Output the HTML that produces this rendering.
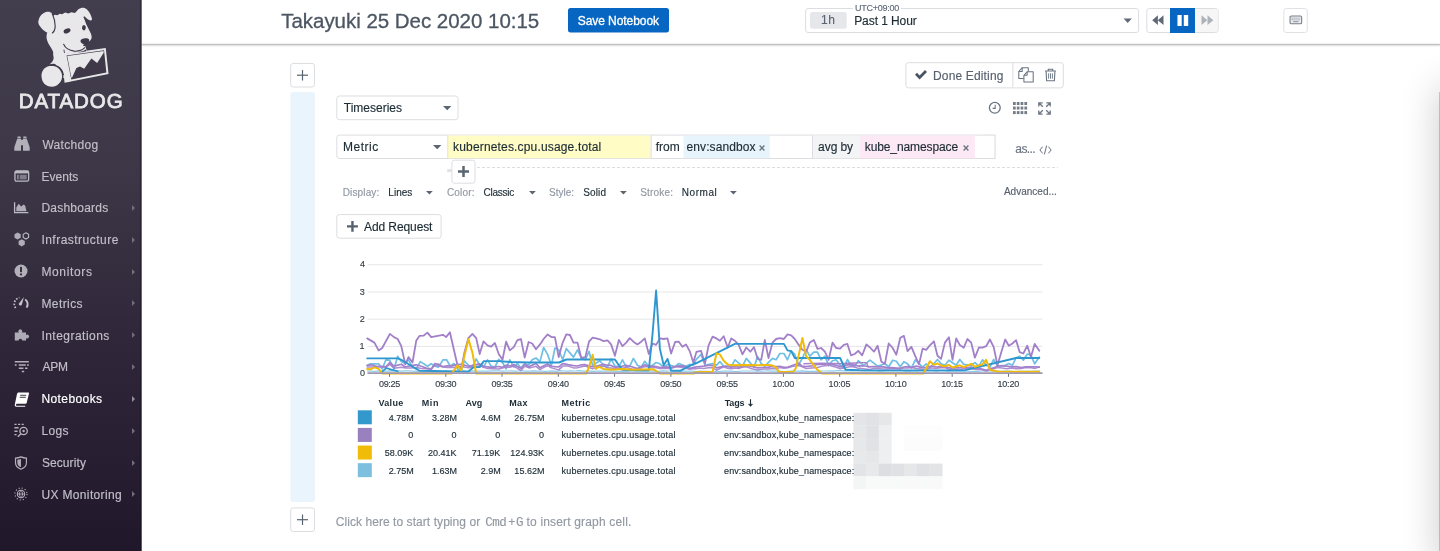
<!DOCTYPE html>
<html>
<head>
<meta charset="utf-8">
<title>Notebook</title>
<style>
*{box-sizing:border-box;margin:0;padding:0}
html,body{width:1440px;height:551px;overflow:hidden;background:#fff;font-family:"Liberation Sans",sans-serif;color:#1c2b34}
.abs{position:absolute}
.t{position:absolute;white-space:pre;line-height:1}
svg{position:absolute;overflow:visible}
</style>
</head>
<body>
<div id="root" style="position:absolute;left:0;top:0;width:1440px;height:551px;will-change:transform">
<div class="abs" style="left:0;top:0;width:142px;height:551px;background:linear-gradient(180deg,#433e4e 0%,#3d3747 30%,#2e2638 65%,#21172b 100%)"></div>
<svg style="left:0;top:0" width="1440" height="551" viewBox="0 0 1440 551"><rect x="139.90" y="0.00" width="1.80" height="551.00" fill="rgba(20,10,30,.35)"/>
<rect x="141.70" y="0.00" width="0.30" height="551.00" fill="#ffffff"/>
<rect x="568.00" y="8.00" width="101.00" height="24.50" rx="2.5" fill="#0866c3"/>
<rect x="805.60" y="8.50" width="333.00" height="24.00" rx="2.50" fill="#fff" stroke="#dcdde0" stroke-width="1.0"/>
<rect x="853.00" y="7.00" width="48.00" height="3.00" fill="#fff"/>
<rect x="810.00" y="12.00" width="36.70" height="16.70" rx="2.5" fill="#e6e7ea"/>
<rect x="1146.80" y="8.50" width="71.30" height="24.00" rx="2.50" fill="#fff" stroke="#dcdde0" stroke-width="1.0"/>
<path d="M1195.0 9H1215.6a2.0 2.0 0 0 1 2.0 2.0V30.0a2.0 2.0 0 0 1 -2.0 2.0H1195.0a0.0 0.0 0 0 1 -0.0 -0.0V9.0a0.0 0.0 0 0 1 0.0 -0.0z" fill="#f6f6f7"/>
<rect x="1170.00" y="8.00" width="25.00" height="25.00" fill="#0866c3"/>
<rect x="1283.80" y="8.50" width="23.50" height="24.00" rx="2.50" fill="#fff" stroke="#e0e1e4" stroke-width="1.0"/>
<rect x="1439.00" y="92.00" width="1.00" height="459.00" fill="rgba(120,120,125,.35)"/>
<rect x="290.70" y="63.40" width="23.80" height="23.60" rx="2.50" fill="#fff" stroke="#dcdde0" stroke-width="1.0"/>
<rect x="297.00" y="74.60" width="11.00" height="1.20" fill="#5b6572"/>
<rect x="301.90" y="70.00" width="1.20" height="10.50" fill="#5b6572"/>
<rect x="290.70" y="507.90" width="23.80" height="23.60" rx="2.50" fill="#fff" stroke="#dcdde0" stroke-width="1.0"/>
<rect x="297.00" y="519.10" width="11.00" height="1.20" fill="#5b6572"/>
<rect x="301.90" y="514.50" width="1.20" height="10.50" fill="#5b6572"/>
<rect x="290.40" y="92.10" width="24.60" height="409.80" rx="3.0" fill="#e9f4fc"/>
<rect x="905.90" y="62.70" width="157.40" height="25.20" rx="2.50" fill="#fff" stroke="#dcdde0" stroke-width="1.0"/>
<rect x="1012.40" y="63.00" width="1.00" height="24.50" fill="#dcdde0"/>
<rect x="336.80" y="96.00" width="121.20" height="23.70" rx="2.50" fill="#fff" stroke="#dcdde0" stroke-width="1.0"/>
<rect x="336.80" y="135.10" width="658.20" height="23.40" rx="2.50" fill="#fff" stroke="#dcdde0" stroke-width="1.0"/>
<rect x="985.00" y="134.60" width="10.50" height="24.40" fill="#fff"/>
<rect x="985.00" y="134.60" width="10.50" height="1.00" fill="#dcdde0"/>
<rect x="985.00" y="158.00" width="10.50" height="1.00" fill="#dcdde0"/>
<rect x="994.50" y="134.60" width="1.00" height="24.40" fill="#dcdde0"/>
<rect x="447.80" y="135.50" width="202.80" height="22.70" fill="#fffcc6"/>
<rect x="447.30" y="135.50" width="1.00" height="22.70" fill="#e6e4c0"/>
<rect x="650.60" y="135.50" width="1.00" height="22.70" fill="#dcdde0"/>
<rect x="683.50" y="135.50" width="86.30" height="22.70" fill="#e8f4fc"/>
<rect x="812.00" y="135.50" width="1.00" height="22.70" fill="#dcdde0"/>
<rect x="813.00" y="135.50" width="46.50" height="22.70" fill="#f3f4f5"/>
<rect x="859.50" y="135.50" width="115.40" height="22.70" fill="#fde8f5"/>
<rect x="447.20" y="169.10" width="4.60" height="3.00" fill="#e2e2e5"/>
<rect x="451.90" y="160.20" width="23.10" height="23.00" rx="2.50" fill="#fff" stroke="#dcdde0" stroke-width="1.0"/>
<rect x="336.80" y="214.60" width="104.30" height="23.60" rx="2.50" fill="#fff" stroke="#dcdde0" stroke-width="1.0"/>
<rect x="357.80" y="410.30" width="14.00" height="14.00" fill="#3399cc"/>
<rect x="357.80" y="427.92" width="14.00" height="14.00" fill="#9980bf"/>
<rect x="357.80" y="445.54" width="14.00" height="14.00" fill="#f0bc08"/>
<rect x="357.80" y="463.16" width="14.00" height="14.00" fill="#7cbfdf"/>
<rect x="853.40" y="412.80" width="12.90" height="12.90" fill="#e4e5e8"/>
<rect x="866.10" y="412.80" width="12.90" height="12.90" fill="#e1e2e5"/>
<rect x="878.80" y="412.80" width="12.90" height="12.90" fill="#e6e7e9"/>
<rect x="853.40" y="425.50" width="12.90" height="12.90" fill="#e6e7e9"/>
<rect x="866.10" y="425.50" width="12.90" height="12.90" fill="#e0e1e4"/>
<rect x="878.80" y="425.50" width="12.90" height="12.90" fill="#eeeff0"/>
<rect x="904.20" y="425.50" width="12.90" height="12.90" fill="#fdfdfd"/>
<rect x="916.90" y="425.50" width="12.90" height="12.90" fill="#fdfdfd"/>
<rect x="929.60" y="425.50" width="12.90" height="12.90" fill="#fdfdfd"/>
<rect x="853.40" y="438.20" width="12.90" height="12.90" fill="#e7e8ea"/>
<rect x="866.10" y="438.20" width="12.90" height="12.90" fill="#e1e2e5"/>
<rect x="878.80" y="438.20" width="12.90" height="12.90" fill="#eeeff0"/>
<rect x="904.20" y="438.20" width="12.90" height="12.90" fill="#fcfcfc"/>
<rect x="916.90" y="438.20" width="12.90" height="12.90" fill="#fcfcfc"/>
<rect x="929.60" y="438.20" width="12.90" height="12.90" fill="#fcfcfc"/>
<rect x="853.40" y="450.90" width="12.90" height="12.90" fill="#e8e9eb"/>
<rect x="866.10" y="450.90" width="12.90" height="12.90" fill="#e6e7e9"/>
<rect x="878.80" y="450.90" width="12.90" height="12.90" fill="#eeeff0"/>
<rect x="853.40" y="463.60" width="12.90" height="12.90" fill="#e3e4e7"/>
<rect x="866.10" y="463.60" width="12.90" height="12.90" fill="#e8e9eb"/>
<rect x="878.80" y="463.60" width="12.90" height="12.90" fill="#dddee1"/>
<rect x="891.50" y="463.60" width="12.90" height="12.90" fill="#e0e1e4"/>
<rect x="904.20" y="463.60" width="12.90" height="12.90" fill="#e6e7e9"/>
<rect x="916.90" y="463.60" width="12.90" height="12.90" fill="#e0e1e4"/>
<rect x="929.60" y="463.60" width="12.90" height="12.90" fill="#e3e4e6"/>
<rect x="853.40" y="476.30" width="12.90" height="12.90" fill="#f4f5f5"/>
<rect x="866.10" y="476.30" width="12.90" height="12.90" fill="#f8f9f9"/>
<rect x="878.80" y="476.30" width="12.90" height="12.90" fill="#f8f9f9"/>
<rect x="891.50" y="476.30" width="12.90" height="12.90" fill="#f8f9f9"/>
<rect x="904.20" y="476.30" width="12.90" height="12.90" fill="#f9f9f9"/>
<rect x="916.90" y="476.30" width="12.90" height="12.90" fill="#f8f9f9"/>
<rect x="929.60" y="476.30" width="12.90" height="12.90" fill="#f9f9f9"/></svg>
<svg style="left:34px;top:4px" width="80" height="86" viewBox="0 0 513 551">
<g fill="#e8e7e9">
<path d="M118 78l16-10 16 4 15-10 15 4 20-11 20 5 20-8 22 6 13-13c6-10 16-18 28-20 14-2 28 2 38 12 14 14 24 34 30 54 2 8 0 14-6 14-10 0-20-6-30-16l-12-10-6 4 8 20 10 26 12 24 16 32c6 12 8 24 6 34-2 10-10 18-22 24l-22 10-8 10-4 10-124 20 28 176-30 6c6-20 4-42-6-60-12-20-34-32-60-32-8 0-16 2-22 4 16-10 26-26 28-44 2-22-4-42-16-60-14-20-26-40-30-62-2-16 0-30 6-42l14-12c14-14 22-34 22-56 0-24-6-46-16-65z"/>
<path d="M28 112c2-20 12-40 30-52 14-10 32-14 46-8 12 6 20 22 24 42 4 18 6 38 2 56-2 16-10 28-22 34-10 4-22 2-34-6-14-8-28-22-38-38-6-10-10-20-8-28z"/>
<path d="M48 458c0-34 28-62 64-62 38 0 68 30 68 68 0 12-4 24-10 34-12 20-34 32-58 32-26 0-48-14-58-38-4-10-6-22-6-34z"/>
<path d="M195 318L460 282 478 448 228 498z"/>
<path d="M186 250L330 270 338 300 200 322z"/>
<path d="M200 316L232 498 196 504 190 452 172 414 140 394 128 350 122 318 150 290z"/>
</g>
<path d="M118 64c10 22 18 50 18 78 0 18-6 34-18 44" fill="none" stroke="#3e3848" stroke-width="7" stroke-linecap="round"/>
<path d="M100 394c24-6 52 2 70 20 10 10 16 24 18 38" fill="none" stroke="#3e3848" stroke-width="7" stroke-linecap="round"/>
<path d="M209 330L449 296 464 439 239 484z" fill="#3e3848"/>
<path d="M213 334L446 301 447 312 405 378 368 350 322 415 295 400 272 410 245 470 240 474z" fill="#e8e7e9"/>
<ellipse cx="212" cy="172" rx="23" ry="14" transform="rotate(-22 212 172)" fill="#3e3848"/>
<ellipse cx="320" cy="152" rx="12" ry="17" transform="rotate(12 320 152)" fill="#3e3848"/>
<path d="M298 236c2-10 16-16 32-16 14 0 24 4 24 12 0 12-12 26-26 28-14 0-32-12-30-24z" fill="#3e3848"/>
<path d="M190 258c10 22 36 40 68 44 28 2 52-6 68-22" fill="none" stroke="#3e3848" stroke-width="7" stroke-linecap="round"/>
<path d="M280 312l56-10-4-10c-12 9-30 16-52 20z" fill="#3e3848"/>
</svg>
<span class="t" style="left:18.75px;top:91.00px;font-size:20.5px;color:#e8e7e9;letter-spacing:0.917px;-webkit-text-stroke:.8px #e8e7e9;">DATADOG</span>
<svg style="left:13.5px;top:136.3px" width="16" height="16" viewBox="0 0 16 16"><path d="M3.500 .5h3.200v1.800H3.500zM9.300 .5h3.200v1.800H9.300zM3.200 2.700h3.800v12H.3v-3.400zM9 2.700h3.800l2.900 8.600v3.400H9zM7 3.800h2v5.400H7z" fill="#b3b0ba"/></svg>
<span class="t" style="left:42.40px;top:139.00px;font-size:12px;color:#c2bfc9;letter-spacing:0.307px;-webkit-text-stroke:0.15px #c2bfc9;">Watchdog</span>
<svg style="left:13.5px;top:168.1px" width="16" height="16" viewBox="0 0 16 16"><rect x=".95" y="2.900" width="13.700" height="10.300" rx="1.600" fill="none" stroke="#bcb9c3" stroke-width="1.300"/><rect x="1" y="2.900" width="13.600" height="2.500" fill="#bcb9c3"/><rect x="3" y="6.800" width="1.700" height="4.600" fill="#c5c2cb" opacity=".6"/><rect x="5.700" y="6.800" width="7" height="4.600" fill="#c5c2cb" opacity=".5"/></svg>
<span class="t" style="left:41.40px;top:171.00px;font-size:12px;color:#c2bfc9;letter-spacing:0.050px;-webkit-text-stroke:0.15px #c2bfc9;">Events</span>
<svg style="left:12.7px;top:199.1px" width="16" height="16" viewBox="0 0 16 16"><path d="M1.600 3.200v10.400H15.400" fill="none" stroke="#bcb9c3" stroke-width="1.300"/><path d="M3.300 12.200V8.400l2.400-3.600 2.400 2.800 2.600-2.200 1.500 1.400 1.300 5.400z" fill="#b0adb8"/></svg>
<span class="t" style="left:41.40px;top:202.00px;font-size:12px;color:#c2bfc9;letter-spacing:0.239px;-webkit-text-stroke:0.15px #c2bfc9;">Dashboards</span>
<div class="abs" style="left:131.500px;top:204.9px;width:0;height:0;border-left:3.500px solid #736d7f;border-top:3px solid transparent;border-bottom:3px solid transparent"></div>
<svg style="left:12.6px;top:231.3px" width="16" height="16" viewBox="0 0 16 16"><path d="M4.600 1.400l3.100 1.800v3.600l-3.100 1.800-3.100-1.800V3.200z" fill="#b0adb8"/><path d="M12.900 1.800l2.700 1.550v3.100l-2.700 1.550-2.700-1.550v-3.100z" fill="none" stroke="#bcb9c3" stroke-width="1.100"/><path d="M8.700 8.200l3.100 1.800v3.600l-3.100 1.800-3.100-1.800V10z" fill="#b0adb8"/></svg>
<span class="t" style="left:41.40px;top:234.00px;font-size:12px;color:#c2bfc9;letter-spacing:0.481px;-webkit-text-stroke:0.15px #c2bfc9;">Infrastructure</span>
<div class="abs" style="left:131.500px;top:236.8px;width:0;height:0;border-left:3.500px solid #736d7f;border-top:3px solid transparent;border-bottom:3px solid transparent"></div>
<svg style="left:12.5px;top:262.8px" width="16" height="16" viewBox="0 0 16 16"><circle cx="8" cy="8" r="6.500" fill="#b3b0ba"/><rect x="7" y="3.800" width="2" height="5.400" rx=".6" fill="#37303f"/><circle cx="8" cy="11.400" r="1.150" fill="#37303f"/></svg>
<span class="t" style="left:41.40px;top:266.00px;font-size:12px;color:#c2bfc9;letter-spacing:0.657px;-webkit-text-stroke:0.15px #c2bfc9;">Monitors</span>
<div class="abs" style="left:131.500px;top:268.6px;width:0;height:0;border-left:3.500px solid #736d7f;border-top:3px solid transparent;border-bottom:3px solid transparent"></div>
<svg style="left:12.6px;top:295.4px" width="16" height="16" viewBox="0 0 16 16"><path d="M2.600 13A6.600 6.600 0 0 1 6.400 2.600" fill="none" stroke="#c5c2cb" stroke-width="1.700" stroke-dasharray="1.600 1.500"/><path d="M12.200 4.400A6.600 6.600 0 0 1 13.600 12.600" fill="none" stroke="#c5c2cb" stroke-width="1.900"/><path d="M10.900 2.100L8.900 9.600a1.600 1.600 0 0 1-3-1.100z" fill="#c5c2cb"/></svg>
<span class="t" style="left:41.40px;top:298.00px;font-size:12px;color:#c2bfc9;letter-spacing:0.425px;-webkit-text-stroke:0.15px #c2bfc9;">Metrics</span>
<div class="abs" style="left:131.500px;top:300.4px;width:0;height:0;border-left:3.500px solid #736d7f;border-top:3px solid transparent;border-bottom:3px solid transparent"></div>
<svg style="left:13.5px;top:327.2px" width="16" height="16" viewBox="0 0 16 16"><path d="M.8 5.600h3.900a2 2 0 1 1 3.200 0H12v2.500a1.900 1.900 0 1 1 0 2.900v2.500H8.200a1.700 1.700 0 1 0-3.600 0H.8z" fill="#aeabb6"/></svg>
<span class="t" style="left:41.40px;top:330.00px;font-size:12px;color:#c2bfc9;letter-spacing:0.477px;-webkit-text-stroke:0.15px #c2bfc9;">Integrations</span>
<div class="abs" style="left:131.500px;top:332.2px;width:0;height:0;border-left:3.500px solid #736d7f;border-top:3px solid transparent;border-bottom:3px solid transparent"></div>
<svg style="left:13.5px;top:359.0px" width="16" height="16" viewBox="0 0 16 16"><path d="M.8 2.700h14M.8 6h1.800M4.800 6h7M13 6h1.800M4.800 9.300h4.600M11 9.300h2.500M7.800 12.600h2.400" stroke="#b3b0ba" stroke-width="1.500" fill="none"/></svg>
<span class="t" style="left:42.40px;top:361.00px;font-size:12px;color:#c2bfc9;letter-spacing:-0.150px;-webkit-text-stroke:0.15px #c2bfc9;">APM</span>
<div class="abs" style="left:131.500px;top:364.0px;width:0;height:0;border-left:3.500px solid #736d7f;border-top:3px solid transparent;border-bottom:3px solid transparent"></div>
<svg style="left:13.5px;top:390.9px" width="16" height="16" viewBox="0 0 16 16"><path d="M4.600 1.400h9.600c.6 0 1 .5.8 1.100l-2.300 9.300c-.1.600-.7 1-1.300 1H3.600c-1 0-1.600.5-1.600 1.100s.5.900 1.200.900h8.200l-.3 1H2.600c-1.400 0-2.100-1-1.800-2.300L3 3C3.200 2 3.800 1.400 4.600 1.400z" fill="#fff"/><path d="M6.200 4.300h6M5.800 6.300h6" stroke="#2f2839" stroke-width=".9"/></svg>
<span class="t" style="left:41.40px;top:393.00px;font-size:12px;color:#ffffff;letter-spacing:0.413px;-webkit-text-stroke:.18px #fff;">Notebooks</span>
<div class="abs" style="left:131.500px;top:395.9px;width:0;height:0;border-left:3.500px solid #958fa0;border-top:3px solid transparent;border-bottom:3px solid transparent"></div>
<svg style="left:13.0px;top:421.9px" width="16" height="16" viewBox="0 0 16 16"><path d="M1.400 2.400h2.200M5 2.400h2.200M8.600 2.400h2.200M1.400 5.800h4.200M1.400 9.200h3.200M1.400 12.600h2.200" stroke="#b3b0ba" stroke-width="1.400" fill="none"/><circle cx="10.600" cy="9" r="3.700" fill="none" stroke="#b8b5bf" stroke-width="1.300"/><circle cx="10.600" cy="9" r="1.200" fill="#b3b0ba"/><path d="M7.900 11.800l-3 3" stroke="#b3b0ba" stroke-width="1.600"/></svg>
<span class="t" style="left:41.40px;top:425.00px;font-size:12px;color:#c2bfc9;letter-spacing:0.333px;-webkit-text-stroke:0.15px #c2bfc9;">Logs</span>
<div class="abs" style="left:131.500px;top:427.7px;width:0;height:0;border-left:3.500px solid #736d7f;border-top:3px solid transparent;border-bottom:3px solid transparent"></div>
<svg style="left:13.1px;top:454.7px" width="16" height="16" viewBox="0 0 16 16"><g transform="translate(.7 .8) scale(.91)"><path d="M8 1.200c2 .9 4 1.300 6 1.300v5.200c0 3.400-2.500 5.800-6 7.100-3.500-1.300-6-3.700-6-7.100V2.500c2 0 4-.4 6-1.300z" fill="none" stroke="#b3b0ba" stroke-width="1.300"/><path d="M8 3.400c-1.300.5-2.600.8-4 .9v3.400c0 2.300 1.600 4 4 5z" fill="#aeabb6"/></g></svg>
<span class="t" style="left:41.90px;top:457.00px;font-size:12px;color:#c2bfc9;letter-spacing:0.093px;-webkit-text-stroke:0.15px #c2bfc9;">Security</span>
<div class="abs" style="left:131.500px;top:459.5px;width:0;height:0;border-left:3.500px solid #736d7f;border-top:3px solid transparent;border-bottom:3px solid transparent"></div>
<svg style="left:13.2px;top:486.1px" width="16" height="16" viewBox="0 0 16 16"><circle cx="8" cy="8" r="3.700" fill="none" stroke="#b3b0ba" stroke-width="1.100"/><path d="M4.300 8h7.400M8 4.300c-2 2-2 5.400 0 7.400M8 4.300c2 2 2 5.400 0 7.400" fill="none" stroke="#b3b0ba" stroke-width=".9"/><circle cx="8" cy="8" r="6" fill="none" stroke="#b3b0ba" stroke-width="1.200" stroke-dasharray="1.100 2.040"/></svg>
<span class="t" style="left:41.40px;top:489.00px;font-size:12px;color:#c2bfc9;letter-spacing:0.354px;-webkit-text-stroke:0.15px #c2bfc9;">UX Monitoring</span>
<div class="abs" style="left:131.500px;top:491.3px;width:0;height:0;border-left:3.500px solid #736d7f;border-top:3px solid transparent;border-bottom:3px solid transparent"></div>
<div class="abs" style="left:142px;top:44px;width:1298px;height:1px;background:#c2c2c5;box-shadow:0 .3px 1.6px rgba(0,0,0,.4)"></div>
<span class="t" style="left:281.20px;top:11.00px;font-size:20.5px;color:#4c5662;letter-spacing:-0.026px;-webkit-text-stroke:.3px #4c5662;">Takayuki 25 Dec 2020 10:15</span>
<span class="t" style="left:577.70px;top:15.00px;font-size:12px;color:#ffffff;letter-spacing:-0.058px;-webkit-text-stroke:.3px #fff;">Save Notebook</span>
<span class="t" style="left:855.05px;top:4.00px;font-size:9px;color:#5f6a78;letter-spacing:-0.269px;-webkit-text-stroke:0.15px #5f6a78;">UTC+09:00</span>
<span class="t" style="left:820.90px;top:14.00px;font-size:12px;color:#5a6472;letter-spacing:0.700px;-webkit-text-stroke:0.15px #5a6472;">1h</span>
<span class="t" style="left:854.20px;top:15.00px;font-size:12px;color:#1c2b34;letter-spacing:-0.075px;-webkit-text-stroke:0.15px #1c2b34;">Past 1 Hour</span>
<svg style="left:1123.300px;top:17.600px" width="9.400" height="5.600" viewBox="0 0 10 6"><path d="M0.600 .5h8.800L5 5.300z" fill="#606a76"/></svg>
<svg style="left:1151px;top:13px" width="14" height="14" viewBox="0 0 14 14"><path d="M6.900 2.300v9.800L1.200 7.200zM12.500 2.300v9.800L6.800 7.200z" fill="#606a76"/></svg>
<svg style="left:1175.500px;top:13px" width="14" height="14" viewBox="0 0 14 14"><path d="M1.450 2h4.250v10.900H1.450zM7.800 2h4.400v10.900H7.800z" fill="#fff"/></svg>
<svg style="left:1200px;top:13px" width="14" height="14" viewBox="0 0 14 14"><path d="M1.500 2.300v9.800L7.300 7.200zM7.500 2.300v9.800L13.300 7.200z" fill="#adb2b9"/></svg>
<svg style="left:1288.700px;top:15.400px" width="14" height="10" viewBox="0 0 14 10"><rect x="1.050" y="1.050" width="11.600" height="7.700" rx="1.300" fill="#eceef0" stroke="#79808b" stroke-width="1.100"/><path d="M2.700 3.100h8.400M2.700 4.800h8.400" stroke="#6b7480" stroke-width=".9" stroke-dasharray=".9 1.050"/><path d="M4.200 6.700h5.400" stroke="#8b919b" stroke-width="1"/></svg>
<div class="abs" style="left:1440px;top:88px;width:40px;height:480px;box-shadow:0 0 38px rgba(0,0,0,.22)"></div>
<svg style="left:914.100px;top:69.400px" width="14" height="11" viewBox="0 0 14 11"><path d="M1 5.800l2-2 2.600 2.600L11 1l2 2-7.400 7.400z" fill="#4a5563"/></svg>
<span class="t" style="left:933.00px;top:70.00px;font-size:12px;color:#57616e;letter-spacing:0.155px;-webkit-text-stroke:0.15px #57616e;">Done Editing</span>
<svg style="left:1018px;top:67px" width="16" height="16" viewBox="0 0 16 16"><g fill="none" stroke="#6b7480" stroke-width="1.050" stroke-linejoin="round"><path d="M5.900 11.500H.8V4.500L4.200 .7h6.100v4.100"/><path d="M4.200 .7v3.800H.8"/><path d="M5.900 8.300L9.100 4.800h6.100v10.100H5.900z" fill="#fff"/><path d="M9.100 4.800v3.500H5.900"/></g></svg>
<svg style="left:1044px;top:68px" width="13" height="14" viewBox="0 0 13 14"><path d="M1 3h11M4.300 2.800V1.300h4.400v1.500" fill="none" stroke="#6b7480" stroke-width="1.100"/><path d="M2.100 3.200l.5 9.500h7.800l.5-9.500" fill="none" stroke="#6b7480" stroke-width="1.100"/><path d="M4.600 5.300v5.400M6.500 5.300v5.400M8.400 5.300v5.400" stroke="#6b7480" stroke-width=".9"/></svg>
<svg style="left:988px;top:101px" width="14" height="14" viewBox="0 0 14 14"><circle cx="6.800" cy="6.800" r="5.400" fill="none" stroke="#6b7480" stroke-width="1.300"/><path d="M7.200 3.800v3.600H4.600" fill="none" stroke="#6b7480" stroke-width="1.100"/></svg>
<svg style="left:1012.600px;top:101.900px" width="15" height="13" viewBox="0 0 15 13"><rect x="0.00" y="0.00" width="2.700" height="3.000" fill="#747c88"/><rect x="3.80" y="0.00" width="2.700" height="3.000" fill="#747c88"/><rect x="7.60" y="0.00" width="2.700" height="3.000" fill="#747c88"/><rect x="11.40" y="0.00" width="2.700" height="3.000" fill="#747c88"/><rect x="0.00" y="4.55" width="2.700" height="3.000" fill="#747c88"/><rect x="3.80" y="4.55" width="2.700" height="3.000" fill="#747c88"/><rect x="7.60" y="4.55" width="2.700" height="3.000" fill="#747c88"/><rect x="11.40" y="4.55" width="2.700" height="3.000" fill="#747c88"/><rect x="0.00" y="9.10" width="2.700" height="3.000" fill="#747c88"/><rect x="3.80" y="9.10" width="2.700" height="3.000" fill="#747c88"/><rect x="7.60" y="9.10" width="2.700" height="3.000" fill="#747c88"/><rect x="11.40" y="9.10" width="2.700" height="3.000" fill="#747c88"/></svg>
<svg style="left:1038px;top:101.500px" width="13" height="13" viewBox="0 0 13 13"><g fill="none" stroke="#6b7480" stroke-width="1.300"><path d="M.8 4.600V.8h3.800M1 1l3.800 3.800"/><path d="M8.400 .8h3.800v3.800M12 1L8.200 4.800"/><path d="M.8 8.400L.8 12.200h3.800M1 12l3.800-3.800" transform="translate(0 0)"/><path d="M12.200 8.400v3.800H8.400M12 12L8.200 8.200"/></g></svg>
<span class="t" style="left:343.75px;top:102.00px;font-size:12px;color:#1c2b34;-webkit-text-stroke:0.15px #1c2b34;">Timeseries</span>
<svg style="left:442.8px;top:106.3px" width="8.4" height="4.2" viewBox="0 0 10 5"><path d="M0 0h10L5 5z" fill="#5c6672"/></svg>
<span class="t" style="left:343.00px;top:141.00px;font-size:12px;color:#1c2b34;letter-spacing:0.530px;-webkit-text-stroke:0.15px #1c2b34;">Metric</span>
<svg style="left:433.2px;top:145.1px" width="8.4" height="4.2" viewBox="0 0 10 5"><path d="M0 0h10L5 5z" fill="#5c6672"/></svg>
<span class="t" style="left:453.05px;top:141.00px;font-size:12px;color:#1c2b34;letter-spacing:0.164px;-webkit-text-stroke:0.15px #1c2b34;">kubernetes.cpu.usage.total</span>
<span class="t" style="left:655.65px;top:141.00px;font-size:12px;color:#1c2b34;letter-spacing:0.033px;-webkit-text-stroke:0.15px #1c2b34;">from</span>
<span class="t" style="left:686.60px;top:141.00px;font-size:12px;color:#1c2b34;letter-spacing:0.080px;-webkit-text-stroke:0.15px #1c2b34;">env:sandbox</span>
<svg style="left:759px;top:144.600px" width="6" height="6" viewBox="0 0 6 6"><path d="M.6 .6l4.800 4.800M5.400 .6L.6 5.400" stroke="#6b7480" stroke-width="1.350"/></svg>
<span class="t" style="left:818.10px;top:141.00px;font-size:12px;color:#1c2b34;letter-spacing:-0.070px;-webkit-text-stroke:0.15px #1c2b34;">avg by</span>
<span class="t" style="left:864.75px;top:141.00px;font-size:12px;color:#1c2b34;letter-spacing:-0.108px;-webkit-text-stroke:0.15px #1c2b34;">kube_namespace</span>
<svg style="left:962.600px;top:144.600px" width="6" height="6" viewBox="0 0 6 6"><path d="M.6 .6l4.800 4.800M5.400 .6L.6 5.400" stroke="#6b7480" stroke-width="1.350"/></svg>
<span class="t" style="left:1015.30px;top:143.00px;font-size:12px;color:#6b7480;letter-spacing:-0.575px;-webkit-text-stroke:0.15px #6b7480;">as...</span>
<svg style="left:1039px;top:145px" width="13" height="10" viewBox="0 0 13 10"><path d="M3.600 1.600L.9 5l2.700 3.400M9.400 1.600L12.100 5 9.400 8.400M7.600 .6L5.400 9.400" fill="none" stroke="#66707c" stroke-width="1"/></svg>
<svg style="left:476.500px;top:167px" width="581" height="1" viewBox="0 0 581 1"><path d="M0 .5h581" stroke="#dcdde0" stroke-width="1" stroke-dasharray="3 2"/></svg>
<svg style="left:458.300px;top:166.400px" width="11" height="11" viewBox="0 0 11 11"><path d="M0 5.500h11M5.500 0v11" stroke="#5b6571" stroke-width="2.500"/></svg>
<span class="t" style="left:342.65px;top:188.00px;font-size:10px;color:#9097a1;letter-spacing:0.157px;-webkit-text-stroke:0.15px #9097a1;">Display:</span>
<span class="t" style="left:388.35px;top:188.00px;font-size:10px;color:#1c2b34;letter-spacing:0.012px;-webkit-text-stroke:0.15px #1c2b34;">Lines</span>
<svg style="left:426.2px;top:191.3px" width="6.8" height="3.6" viewBox="0 0 10 5"><path d="M0 0h10L5 5z" fill="#5c6672"/></svg>
<span class="t" style="left:446.90px;top:188.00px;font-size:10px;color:#9097a1;letter-spacing:0.210px;-webkit-text-stroke:0.15px #9097a1;">Color:</span>
<span class="t" style="left:483.60px;top:188.00px;font-size:10px;color:#1c2b34;letter-spacing:-0.250px;-webkit-text-stroke:0.15px #1c2b34;">Classic</span>
<svg style="left:528.6px;top:191.3px" width="6.8" height="3.6" viewBox="0 0 10 5"><path d="M0 0h10L5 5z" fill="#5c6672"/></svg>
<span class="t" style="left:549.00px;top:188.00px;font-size:10px;color:#9097a1;letter-spacing:0.010px;-webkit-text-stroke:0.15px #9097a1;">Style:</span>
<span class="t" style="left:583.30px;top:188.00px;font-size:10px;color:#1c2b34;letter-spacing:0.113px;-webkit-text-stroke:0.15px #1c2b34;">Solid</span>
<svg style="left:619.7px;top:191.3px" width="6.8" height="3.6" viewBox="0 0 10 5"><path d="M0 0h10L5 5z" fill="#5c6672"/></svg>
<span class="t" style="left:640.20px;top:188.00px;font-size:10px;color:#9097a1;letter-spacing:0.192px;-webkit-text-stroke:0.15px #9097a1;">Stroke:</span>
<span class="t" style="left:681.85px;top:188.00px;font-size:10px;color:#1c2b34;letter-spacing:0.530px;-webkit-text-stroke:0.15px #1c2b34;">Normal</span>
<svg style="left:730.4px;top:191.3px" width="6.8" height="3.6" viewBox="0 0 10 5"><path d="M0 0h10L5 5z" fill="#5c6672"/></svg>
<span class="t" style="left:1003.90px;top:187.00px;font-size:10px;color:#57616e;letter-spacing:0.010px;-webkit-text-stroke:0.15px #57616e;">Advanced...</span>
<svg style="left:346.700px;top:221.200px" width="11" height="11" viewBox="0 0 11 11"><path d="M0 5.400h10.900M5.450 0v10.800" stroke="#57616e" stroke-width="2.400"/></svg>
<span class="t" style="left:364.10px;top:221.00px;font-size:12px;color:#1c2b34;letter-spacing:-0.105px;-webkit-text-stroke:0.15px #1c2b34;">Add Request</span>
<span class="t" style="left:335.70px;top:516.00px;font-size:12px;color:#9299a2;letter-spacing:0.064px;-webkit-text-stroke:0.15px #9299a2;">Click here to start typing or</span>
<span class="t" style="left:485.15px;top:517.00px;font-size:12.5px;color:#9299a2;letter-spacing:-0.475px;font-family:'Liberation Mono';-webkit-text-stroke:0.15px #9299a2;">Cmd</span>
<span class="t" style="left:508.25px;top:517.00px;font-size:12px;color:#9299a2;letter-spacing:-0.900px;font-family:'Liberation Mono';-webkit-text-stroke:0.15px #9299a2;">+</span>
<span class="t" style="left:515.95px;top:517.00px;font-size:12.5px;color:#9299a2;letter-spacing:-0.400px;font-family:'Liberation Mono';-webkit-text-stroke:0.15px #9299a2;">G</span>
<span class="t" style="left:526.55px;top:516.00px;font-size:12px;color:#9299a2;letter-spacing:0.170px;-webkit-text-stroke:0.15px #9299a2;">to insert graph cell.</span>
<svg style="left:0;top:0" width="1440" height="551" viewBox="0 0 1440 551">
<path d="M367.500 346.40H1042.500" stroke="#e6e6e8" stroke-width="1"/>
<path d="M367.500 319.20H1042.500" stroke="#e6e6e8" stroke-width="1"/>
<path d="M367.500 292.00H1042.500" stroke="#e6e6e8" stroke-width="1"/>
<path d="M367.500 264.80H1042.500" stroke="#e6e6e8" stroke-width="1"/>
<polyline points="367.2,365.3 370.4,363.8 378.6,363.8 382.2,368.9 385.9,359.8 389.5,360.2 394.0,368.9 397.7,356.2 401.3,361.6 405.3,363.8 408.5,359.8 412.5,367.1 416.3,368.9 420.3,361.6 427.6,366.2 431.2,363.8 434.8,366.2 438.5,367.1 443.0,359.8 446.6,359.8 450.3,366.2 453.9,363.5 457.5,368.9 461.2,370.7 464.4,360.7 468.4,365.3 472.4,367.1 476.2,358.9 479.7,365.3 483.5,367.1 487.5,359.8 491.1,366.2 494.9,367.1 498.7,359.5 502.5,362.5 506.1,368.9 509.8,359.8 513.8,367.1 517.4,363.5 521.0,368.0 524.7,363.5 528.3,365.3 532.2,359.8 536.0,358.0 540.0,361.6 543.6,347.5 547.6,354.4 551.4,365.3 554.9,348.0 558.7,349.8 562.7,359.8 566.3,348.6 573.5,357.1 577.5,349.8 581.3,358.0 585.3,359.8 589.0,351.3 592.6,365.3 599.8,360.7 603.5,365.3 607.5,367.1 611.1,358.9 614.9,366.2 618.9,366.7 622.5,359.8 626.2,367.1 629.8,366.2 633.4,358.4 637.4,365.3 641.2,367.1 644.8,361.3 648.8,366.2 652.5,365.3 656.1,362.5 659.9,363.8 663.7,367.1 667.5,364.4 675.1,366.7 678.8,363.5 686.0,366.2 689.7,364.4 693.3,365.3 695.9,359.8 701.0,354.4 705.0,365.3 712.6,363.5 716.4,365.3 719.9,361.6 723.7,366.2 731.3,366.7 734.9,359.8 742.5,366.2 746.3,358.4 754.0,367.1 757.6,356.6 761.2,363.5 764.8,366.2 772.5,358.4 776.1,359.8 779.9,353.5 783.9,353.5 787.5,359.8 791.2,350.8 794.8,354.4 798.4,365.3 802.4,358.0 806.2,349.8 809.8,356.2 813.8,352.2 817.5,352.2 821.1,359.8 824.9,356.2 828.7,365.3 832.5,360.7 836.1,359.8 840.1,365.3 843.8,368.0 847.4,359.5 851.0,365.3 854.7,366.2 858.3,360.7 863.6,365.3 870.0,360.2 877.6,366.2 884.9,363.8 888.7,366.7 892.7,360.2 896.3,361.3 900.3,366.7 903.9,361.7 907.5,363.8 911.4,368.0 915.3,359.8 922.6,367.1 926.2,363.8 929.9,368.0 937.5,359.5 941.1,363.8 944.9,365.3 948.9,360.2 956.2,365.3 959.8,359.5 963.8,364.4 971.2,365.3 974.9,362.6 978.9,366.2 982.5,359.8 986.1,365.3 989.9,367.1 993.7,359.5 997.5,366.2 1005.2,365.3 1008.8,363.5 1012.4,365.3 1016.1,357.7 1019.7,356.2 1023.3,360.2 1027.3,354.0 1030.9,355.3 1034.7,363.8 1039.3,357.1" fill="none" stroke="#6fbfe4" stroke-width="1.7" stroke-linejoin="round" stroke-linecap="round" opacity="1"/>
<polyline points="367.5,371.1 371.3,371.0 375.0,371.3 378.8,370.9 382.6,371.2 386.4,371.1 390.1,370.9 393.9,371.2 397.7,370.8 401.5,371.1 405.2,370.9 409.0,370.9 412.8,371.1 416.6,371.4 420.3,370.9 424.1,370.9 427.9,371.2 431.7,371.4 435.4,371.2 439.2,371.1 443.0,371.5 446.8,370.8 450.5,371.4 454.3,371.0 458.1,370.9 461.9,370.8 465.6,371.0 469.4,371.3 473.2,370.9 477.0,371.1 480.7,371.2 484.5,371.0 488.3,371.1 492.1,370.8 495.8,370.8 499.6,370.9 503.4,371.2 507.2,371.0 510.9,370.9 514.7,371.1 518.5,371.0 522.3,370.9 526.0,371.2 529.8,371.2 533.6,370.8 537.4,371.1 541.1,371.0 544.9,371.3 548.7,371.2 552.5,370.9 556.2,371.3 560.0,370.7 563.8,371.0 567.6,371.2 571.4,370.8 575.1,371.0 578.9,370.7 582.7,371.2 586.5,371.2 590.3,371.1 594.1,371.3 597.8,371.0 601.6,371.2 605.4,371.2 609.2,371.2 613.0,371.1 616.8,371.4 620.5,371.4 624.3,371.1 628.1,371.3 631.9,370.8 635.7,371.3 639.5,371.3 643.2,371.5 647.0,371.4 650.8,371.0 654.6,371.1 658.4,371.3 662.2,370.9 665.9,371.2 669.7,371.0 673.5,371.0 677.3,370.9 681.1,371.4 684.9,371.0 688.6,371.1 692.4,371.2 696.2,371.6 700.0,371.0 703.8,371.3 707.6,371.3 711.4,371.5 715.2,371.5 719.0,371.5 722.9,371.1 726.7,371.2 730.5,371.1 734.3,371.5 738.1,371.5 741.9,371.0 745.7,371.0 749.5,371.0 753.3,371.0 757.1,371.2 761.0,371.2 764.8,371.0 768.6,370.8 772.4,371.1 776.2,371.1 780.0,371.2 783.8,371.5 787.6,371.3 791.4,371.1 795.2,371.2 799.0,371.2 802.9,370.8 806.7,371.4 810.5,371.3 814.3,371.3 818.1,371.3 821.9,371.0 825.7,371.0 829.5,370.8 833.3,371.1 837.1,370.7 841.0,370.7 844.8,370.8 848.6,370.8 852.4,370.9 856.2,370.7 860.0,370.7 863.8,370.8 867.6,370.7 871.5,370.9 875.3,370.7 879.1,371.3 882.9,371.1 886.7,370.8 890.6,370.9 894.4,370.9 898.2,370.9 902.0,370.8 905.8,371.3 909.6,371.4 913.5,371.0 917.3,371.1 921.1,370.8 924.9,370.8 928.7,371.0 932.6,370.9 936.4,371.3 940.2,370.9 944.0,370.8 947.8,371.4 951.7,371.1 955.5,370.9 959.3,371.1 963.1,370.8 966.9,371.1 970.8,371.5 974.6,371.4 978.4,371.3 982.2,371.0 986.0,371.0 989.9,370.9 993.7,371.3 997.5,371.2 1001.3,371.4 1005.1,371.0 1008.9,371.0 1012.8,371.4 1016.6,371.5 1020.4,371.4 1024.2,371.4 1028.0,371.4 1031.9,371.4 1035.7,371.0 1039.5,371.2" fill="none" stroke="#6fbfe4" stroke-width="1.2" stroke-linejoin="round" stroke-linecap="round" opacity="0.8"/>
<polyline points="367.2,367.0 371.8,366.9 376.5,366.5 381.2,366.7 385.9,367.2 389.9,364.4 394.0,368.3 401.3,367.2 405.3,367.9 410.8,368.1 416.3,367.6 421.3,368.5 426.3,368.7 431.2,369.4 434.8,365.3 438.9,366.1 443.0,367.1 447.5,367.4 452.1,367.6 456.6,367.3 461.2,366.5 468.4,367.7 474.0,367.3 479.7,365.6 483.6,367.3 487.5,368.6 493.1,368.8 498.7,369.1 502.5,368.1 506.2,367.0 510.0,367.2 513.8,366.0 521.0,370.6 524.7,366.3 529.2,367.9 530.0,367.9 536.0,366.3 540.0,369.6 543.8,367.3 547.6,365.7 551.4,367.9 558.7,369.9 562.7,366.1 568.1,366.1 573.5,367.9 577.5,367.7 581.4,366.8 585.3,366.0 592.6,368.8 598.0,367.1 603.5,365.9 607.3,367.8 611.1,368.0 614.9,368.4 620.5,368.5 626.2,367.4 631.8,368.9 637.4,369.7 644.8,366.5 648.6,366.9 652.4,367.4 656.1,367.7 659.9,368.5 665.5,368.2 671.1,368.6 675.0,367.1 678.8,367.1 684.2,367.7 689.7,369.2 694.2,368.5 695.0,368.9 699.4,368.0 703.8,368.5 708.2,367.7 712.6,367.5 716.4,370.2 723.7,366.8 727.5,368.3 731.3,368.8 735.0,368.0 738.8,368.5 742.6,367.1 746.3,366.9 752.0,368.7 757.6,369.9 762.5,369.1 767.5,368.9 772.5,368.5 776.2,368.7 780.0,367.6 783.8,368.2 787.5,367.7 793.0,366.3 798.4,365.5 802.3,366.8 806.2,368.5 811.8,368.0 817.5,367.5 823.1,365.9 828.7,365.3 832.5,366.2 836.3,367.3 840.1,368.7 845.6,367.4 851.0,366.6 855.1,367.3 859.2,368.6 860.0,368.3 865.0,368.9 870.0,369.4 873.8,368.2 877.6,368.4 881.4,368.7 886.4,368.9 891.3,368.4 896.3,368.8 900.1,368.9 903.8,368.1 907.6,368.0 911.4,367.4 916.3,368.5 921.3,368.9 926.2,369.3 931.2,367.9 936.2,368.2 941.1,367.7 944.9,367.6 948.6,369.2 952.4,369.9 956.2,369.5 959.9,370.0 963.7,368.8 967.5,368.5 971.2,368.7 976.2,369.5 981.2,369.6 986.1,371.0 989.9,370.1 993.7,368.8 997.5,367.6 1002.2,368.0 1006.8,368.7 1011.4,367.9 1016.1,368.8 1021.0,368.4 1026.0,367.6 1030.9,367.8 1035.1,368.4 1039.3,367.1" fill="none" stroke="#a482cb" stroke-width="1.5" stroke-linejoin="round" stroke-linecap="round" opacity="0.9"/>
<polyline points="367.2,365.5 371.8,364.8 376.5,366.6 381.2,366.4 385.9,366.8 389.9,362.5 394.0,366.1 401.3,364.2 405.3,367.0 410.8,365.6 416.3,364.8 421.3,366.3 426.3,368.1 431.2,368.9 434.8,363.7 438.9,364.4 443.0,366.7 447.5,365.9 452.1,365.9 456.6,364.6 461.2,364.3 468.4,366.3 474.0,365.2 479.7,363.9 483.6,366.4 487.5,366.8 493.1,367.4 498.7,366.5 502.5,367.3 506.2,365.2 510.0,366.0 513.8,364.6 521.0,368.4 524.7,364.3 529.2,367.3 530.0,366.1 536.0,363.5 540.0,367.8 543.8,365.8 547.6,364.0 551.4,366.3 558.7,367.0 562.7,363.6 568.1,364.7 573.5,365.6 577.5,366.0 581.4,364.8 585.3,364.7 592.6,366.7 598.0,365.9 603.5,364.2 607.3,365.2 611.1,365.4 614.9,367.3 620.5,366.5 626.2,365.4 631.8,366.8 637.4,368.6 644.8,364.7 648.6,366.4 652.4,366.0 656.1,366.5 659.9,367.5 665.5,366.9 671.1,367.3 675.0,366.5 678.8,365.9 684.2,366.1 689.7,368.4 694.2,367.3 695.0,367.1 699.4,366.5 703.8,366.2 708.2,365.4 712.6,365.3 716.4,367.9 723.7,366.4 727.5,366.4 731.3,367.2 735.0,366.5 738.8,367.2 742.6,366.7 746.3,365.7 752.0,366.5 757.6,367.9 762.5,367.5 767.5,367.3 772.5,366.3 776.2,366.7 780.0,366.3 783.8,367.4 787.5,367.4 793.0,365.2 798.4,363.2 802.3,366.1 806.2,366.5 811.8,365.9 817.5,364.5 823.1,364.3 828.7,363.6 832.5,364.7 836.3,365.3 840.1,366.9 845.6,365.1 851.0,364.6 855.1,365.1 859.2,366.3 860.0,365.7 865.0,366.0 870.0,366.9 873.8,366.5 877.6,366.9 881.4,366.6 886.4,367.4 891.3,367.7 896.3,368.2 900.1,368.2 903.8,367.0 907.6,366.5 911.4,367.4 916.3,366.1 921.3,367.4 926.2,367.5 931.2,366.0 936.2,367.0 941.1,366.7 944.9,366.8 948.6,367.6 952.4,368.3 956.2,367.7 959.9,367.9 963.7,367.5 967.5,367.6 971.2,367.1 976.2,368.2 981.2,368.7 986.1,370.3 989.9,368.9 993.7,367.9 997.5,366.0 1002.2,365.9 1006.8,366.2 1011.4,366.8 1016.1,366.6 1021.0,367.6 1026.0,366.9 1030.9,366.8 1035.1,366.9 1039.3,367.1" fill="none" stroke="#a482cb" stroke-width="1.7" stroke-linejoin="round" stroke-linecap="round" opacity="1"/>
<polyline points="803.9,363.8 822.0,363.1 840.1,363.8 859.2,362.7 860.0,362.6 866.4,362.6 868.2,367.1" fill="none" stroke="#a482cb" stroke-width="1.4" stroke-linejoin="round" stroke-linecap="round" opacity="1"/>
<polyline points="367.2,338.4 374.4,342.6 378.6,350.4 382.2,348.0 389.9,333.9 394.0,337.1 397.7,339.0 401.3,346.2 405.3,364.4 408.5,357.1 412.5,362.5 416.3,340.4 419.4,335.9 423.4,335.7 427.4,332.6 431.2,337.1 443.0,334.8 446.1,337.1 449.9,332.2 453.9,349.8 457.5,365.3 461.2,368.9 464.4,352.6 468.4,338.1 472.4,333.9 476.2,338.1 479.7,354.0 483.5,341.3 487.5,345.3 491.1,346.6 494.9,343.0 498.7,354.0 502.5,359.8 506.1,341.7 509.8,350.4 513.8,347.1 517.4,340.2 521.0,339.1 524.7,357.6 528.6,342.0 532.2,343.5 536.0,349.3 540.0,344.4 543.6,339.0 547.6,334.4 551.4,337.1 554.9,337.1 558.7,357.1 562.7,342.6 566.3,334.4 569.9,335.0 573.5,342.6 577.5,342.6 581.3,358.0 585.3,357.1 589.0,341.7 592.6,337.7 596.2,338.4 599.8,339.3 603.5,341.1 607.5,340.4 611.1,344.4 614.9,355.8 618.9,339.9 622.5,346.2 626.2,342.6 629.8,338.1 633.4,341.7 637.4,344.4 641.2,341.7 644.8,338.4 648.8,354.0 652.5,343.5 656.1,344.9 659.9,338.4 663.7,339.0 667.5,338.4 671.1,353.5 675.1,342.0 678.8,341.7 682.4,346.8 686.0,344.4 689.7,351.1 693.3,362.5 696.5,351.7 697.7,351.7 701.0,350.8 705.0,363.5 708.6,345.3 712.6,336.6 716.4,338.4 719.9,340.8 723.7,336.2 727.7,347.5 731.3,338.4 734.9,340.8 738.5,344.4 742.5,354.4 746.3,347.5 750.3,351.7 754.0,347.1 757.6,358.9 761.2,359.8 764.8,339.9 768.5,358.0 772.5,342.6 776.1,339.0 779.9,338.1 783.9,339.0 787.5,334.4 791.2,335.3 794.8,339.0 798.4,344.4 802.4,349.8 806.2,351.7 809.8,342.6 813.8,339.9 817.5,348.9 821.1,348.0 824.9,351.7 828.7,359.8 832.5,342.6 836.1,348.0 840.1,348.6 843.8,344.9 847.4,343.9 851.0,355.3 854.7,354.0 858.3,350.8 862.2,355.3 866.4,344.4 870.0,347.5 874.0,351.7 877.6,345.7 881.4,361.7 884.9,363.8 888.7,343.5 892.7,348.0 896.3,354.8 900.3,337.7 903.9,335.9 907.5,351.1 911.4,346.8 915.3,356.2 919.0,364.4 922.6,348.6 926.2,349.9 929.9,345.3 933.9,341.3 937.5,355.8 941.1,358.9 944.9,342.6 948.9,337.2 952.5,359.8 956.2,338.4 959.8,345.0 963.8,347.7 967.4,339.0 971.2,342.6 974.9,357.7 978.9,347.5 982.5,347.7 986.1,346.2 989.9,339.5 993.7,347.1 997.5,365.3 1001.2,352.6 1005.2,339.5 1008.8,345.7 1012.4,343.5 1016.1,340.2 1019.7,352.2 1023.3,353.5 1027.3,345.7 1030.9,357.1 1034.7,343.9 1039.3,350.8" fill="none" stroke="#a17fc9" stroke-width="1.8" stroke-linejoin="round" stroke-linecap="round" opacity="1"/>
<polyline points="382.2,371.6 386.4,368.0 390.4,369.4 397.7,371.3" fill="none" stroke="#2f97cf" stroke-width="1.7" stroke-linejoin="round" stroke-linecap="round" opacity="1"/>
<polyline points="367.2,358.4 397.7,358.4 401.3,359.8 419.4,370.7 468.4,371.6 473.9,367.1 479.7,367.1 483.8,361.1 499.3,361.1 510.1,362.0 529.2,362.5 530.0,362.5 559.0,362.5 566.3,359.5 614.9,359.5 618.9,365.3 622.5,369.8 648.8,370.2 652.5,334.4 656.1,290.5 659.9,348.9 663.7,365.3 667.5,358.9 671.1,370.7 680.6,370.7 695.1,363.1 695.0,363.8 734.9,343.9 783.9,343.9 787.5,350.4 791.2,351.1 794.8,358.0 840.1,358.0 845.6,369.8 859.2,370.3 860.0,370.4 965.2,370.2 1016.1,358.0 1039.3,358.0" fill="none" stroke="#2f97cf" stroke-width="1.9" stroke-linejoin="round" stroke-linecap="round" opacity="1"/>
<polyline points="367.2,368.9 370.4,369.3 374.4,367.4 378.6,368.9 382.2,373.5 451.7,373.5 457.5,365.3 461.2,370.3 464.4,356.2 468.4,339.0 472.4,352.6 476.2,373.5 529.2,373.5 530.0,373.5 586.2,373.5 589.0,367.1 592.6,354.7 595.7,368.9 598.9,366.7 603.5,368.9 611.1,369.8 622.5,368.9 633.4,369.8 653.4,369.3 659.9,373.5 694.2,373.5 695.0,372.3 712.6,371.8 716.4,353.5 719.9,354.4 723.7,360.7 727.7,364.4 731.3,365.3 746.3,364.9 757.6,365.3 768.5,364.9 772.5,365.6 776.1,367.4 778.8,372.0 793.0,372.0 795.7,368.5 799.3,352.6 802.4,338.1 806.2,356.2 809.8,359.8 813.8,365.3 816.6,368.9 822.0,373.5 859.2,373.5 860.0,373.5 923.5,373.5 929.9,361.3 933.9,364.9 937.5,363.5 941.1,365.6 944.9,366.2 948.9,364.9 952.5,367.5 959.8,365.3 963.8,367.1 971.2,363.8 974.9,366.7 982.5,364.4 986.1,359.8 989.9,369.8 997.5,371.4 1016.1,371.8 1039.3,371.8" fill="none" stroke="#f0bb0a" stroke-width="2.0" stroke-linejoin="round" stroke-linecap="round" opacity="1"/>
<path d="M367.500 373.100H1042.500" stroke="#a097b1" stroke-width="1.900"/>
<path d="M389.5 374V376.800" stroke="#6f7681" stroke-width="1"/>
<path d="M445.8 374V376.800" stroke="#6f7681" stroke-width="1"/>
<path d="M502.0 374V376.800" stroke="#6f7681" stroke-width="1"/>
<path d="M558.3 374V376.800" stroke="#6f7681" stroke-width="1"/>
<path d="M614.6 374V376.800" stroke="#6f7681" stroke-width="1"/>
<path d="M670.9 374V376.800" stroke="#6f7681" stroke-width="1"/>
<path d="M727.1 374V376.800" stroke="#6f7681" stroke-width="1"/>
<path d="M783.4 374V376.800" stroke="#6f7681" stroke-width="1"/>
<path d="M839.7 374V376.800" stroke="#6f7681" stroke-width="1"/>
<path d="M895.9 374V376.800" stroke="#6f7681" stroke-width="1"/>
<path d="M952.2 374V376.800" stroke="#6f7681" stroke-width="1"/>
<path d="M1008.5 374V376.800" stroke="#6f7681" stroke-width="1"/>
</svg>
<span class="t" style="left:359.95px;top:369.00px;font-size:9px;color:#343f49;letter-spacing:-0.100px;-webkit-text-stroke:0.15px #343f49;">0</span>
<span class="t" style="left:359.45px;top:342.00px;font-size:9px;color:#343f49;letter-spacing:0.650px;-webkit-text-stroke:0.15px #343f49;">1</span>
<span class="t" style="left:359.70px;top:315.00px;font-size:9px;color:#343f49;letter-spacing:0.400px;-webkit-text-stroke:0.15px #343f49;">2</span>
<span class="t" style="left:359.70px;top:288.00px;font-size:9px;color:#343f49;letter-spacing:0.150px;-webkit-text-stroke:0.15px #343f49;">3</span>
<span class="t" style="left:359.95px;top:260.00px;font-size:9px;color:#343f49;letter-spacing:-0.100px;-webkit-text-stroke:0.15px #343f49;">4</span>
<span class="t" style="left:378.95px;top:380.00px;font-size:9px;color:#343f49;letter-spacing:-0.300px;-webkit-text-stroke:0.15px #343f49;">09:25</span>
<span class="t" style="left:435.22px;top:380.00px;font-size:9px;color:#343f49;letter-spacing:-0.300px;-webkit-text-stroke:0.15px #343f49;">09:30</span>
<span class="t" style="left:491.49px;top:380.00px;font-size:9px;color:#343f49;letter-spacing:-0.300px;-webkit-text-stroke:0.15px #343f49;">09:35</span>
<span class="t" style="left:547.76px;top:380.00px;font-size:9px;color:#343f49;letter-spacing:-0.300px;-webkit-text-stroke:0.15px #343f49;">09:40</span>
<span class="t" style="left:604.03px;top:380.00px;font-size:9px;color:#343f49;letter-spacing:-0.300px;-webkit-text-stroke:0.15px #343f49;">09:45</span>
<span class="t" style="left:660.30px;top:380.00px;font-size:9px;color:#343f49;letter-spacing:-0.300px;-webkit-text-stroke:0.15px #343f49;">09:50</span>
<span class="t" style="left:716.57px;top:380.00px;font-size:9px;color:#343f49;letter-spacing:-0.300px;-webkit-text-stroke:0.15px #343f49;">09:55</span>
<span class="t" style="left:772.34px;top:380.00px;font-size:9px;color:#343f49;letter-spacing:-0.175px;-webkit-text-stroke:0.15px #343f49;">10:00</span>
<span class="t" style="left:828.61px;top:380.00px;font-size:9px;color:#343f49;letter-spacing:-0.175px;-webkit-text-stroke:0.15px #343f49;">10:05</span>
<span class="t" style="left:884.88px;top:380.00px;font-size:9px;color:#343f49;letter-spacing:-0.175px;-webkit-text-stroke:0.15px #343f49;">10:10</span>
<span class="t" style="left:941.15px;top:380.00px;font-size:9px;color:#343f49;letter-spacing:-0.175px;-webkit-text-stroke:0.15px #343f49;">10:15</span>
<span class="t" style="left:997.42px;top:380.00px;font-size:9px;color:#343f49;letter-spacing:-0.175px;-webkit-text-stroke:0.15px #343f49;">10:20</span>
<span class="t" style="left:378.45px;top:399.00px;font-size:9px;color:#1c2b34;letter-spacing:0.325px;font-weight:700;">Value</span>
<span class="t" style="left:421.70px;top:399.00px;font-size:9px;color:#1c2b34;letter-spacing:0.650px;font-weight:700;">Min</span>
<span class="t" style="left:465.55px;top:399.00px;font-size:9px;color:#1c2b34;letter-spacing:0.075px;font-weight:700;">Avg</span>
<span class="t" style="left:509.20px;top:399.00px;font-size:9px;color:#1c2b34;letter-spacing:0.400px;font-weight:700;">Max</span>
<span class="t" style="left:561.50px;top:399.00px;font-size:9px;color:#1c2b34;letter-spacing:0.450px;font-weight:700;">Metric</span>
<span class="t" style="left:724.70px;top:399.00px;font-size:9px;color:#1c2b34;letter-spacing:-0.167px;font-weight:700;">Tags</span>
<svg style="left:747.500px;top:398.500px" width="5" height="8" viewBox="0 0 5 8"><path d="M2.500 .3v6.400M.6 4.800l1.900 2.200 1.900-2.200" fill="none" stroke="#1c2b34" stroke-width="1.100"/></svg>
<span class="t" style="left:388.68px;top:414.00px;font-size:9px;color:#1c2b34;letter-spacing:0.019px;-webkit-text-stroke:0.15px #1c2b34;">4.78M</span>
<span class="t" style="left:431.98px;top:414.00px;font-size:9px;color:#1c2b34;letter-spacing:0.019px;-webkit-text-stroke:0.15px #1c2b34;">3.28M</span>
<span class="t" style="left:480.69px;top:414.00px;font-size:9px;color:#1c2b34;letter-spacing:0.020px;-webkit-text-stroke:0.15px #1c2b34;">4.6M</span>
<span class="t" style="left:514.36px;top:414.00px;font-size:9px;color:#1c2b34;letter-spacing:0.018px;-webkit-text-stroke:0.15px #1c2b34;">26.75M</span>
<span class="t" style="left:561.50px;top:414.00px;font-size:9px;color:#1c2b34;letter-spacing:0.240px;-webkit-text-stroke:0.15px #1c2b34;">kubernetes.cpu.usage.total</span>
<span class="t" style="left:724.00px;top:414.00px;font-size:9px;color:#1c2b34;letter-spacing:0.121px;-webkit-text-stroke:0.15px #1c2b34;">env:sandbox,kube_namespace:</span>
<span class="t" style="left:408.25px;top:431.00px;font-size:9px;color:#1c2b34;-webkit-text-stroke:0.15px #1c2b34;">0</span>
<span class="t" style="left:451.55px;top:431.00px;font-size:9px;color:#1c2b34;-webkit-text-stroke:0.15px #1c2b34;">0</span>
<span class="t" style="left:495.25px;top:431.00px;font-size:9px;color:#1c2b34;-webkit-text-stroke:0.15px #1c2b34;">0</span>
<span class="t" style="left:538.95px;top:431.00px;font-size:9px;color:#1c2b34;-webkit-text-stroke:0.15px #1c2b34;">0</span>
<span class="t" style="left:561.50px;top:431.00px;font-size:9px;color:#1c2b34;letter-spacing:0.240px;-webkit-text-stroke:0.15px #1c2b34;">kubernetes.cpu.usage.total</span>
<span class="t" style="left:724.00px;top:431.00px;font-size:9px;color:#1c2b34;letter-spacing:0.121px;-webkit-text-stroke:0.15px #1c2b34;">env:sandbox,kube_namespace:</span>
<span class="t" style="left:384.66px;top:449.00px;font-size:9px;color:#1c2b34;letter-spacing:0.017px;-webkit-text-stroke:0.15px #1c2b34;">58.09K</span>
<span class="t" style="left:427.96px;top:449.00px;font-size:9px;color:#1c2b34;letter-spacing:0.017px;-webkit-text-stroke:0.15px #1c2b34;">20.41K</span>
<span class="t" style="left:471.66px;top:449.00px;font-size:9px;color:#1c2b34;letter-spacing:0.017px;-webkit-text-stroke:0.15px #1c2b34;">71.19K</span>
<span class="t" style="left:510.35px;top:449.00px;font-size:9px;color:#1c2b34;letter-spacing:0.017px;-webkit-text-stroke:0.15px #1c2b34;">124.93K</span>
<span class="t" style="left:561.50px;top:449.00px;font-size:9px;color:#1c2b34;letter-spacing:0.240px;-webkit-text-stroke:0.15px #1c2b34;">kubernetes.cpu.usage.total</span>
<span class="t" style="left:724.00px;top:449.00px;font-size:9px;color:#1c2b34;letter-spacing:0.121px;-webkit-text-stroke:0.15px #1c2b34;">env:sandbox,kube_namespace:</span>
<span class="t" style="left:388.68px;top:467.00px;font-size:9px;color:#1c2b34;letter-spacing:0.019px;-webkit-text-stroke:0.15px #1c2b34;">2.75M</span>
<span class="t" style="left:431.98px;top:467.00px;font-size:9px;color:#1c2b34;letter-spacing:0.018px;-webkit-text-stroke:0.15px #1c2b34;">1.63M</span>
<span class="t" style="left:480.69px;top:467.00px;font-size:9px;color:#1c2b34;letter-spacing:0.020px;-webkit-text-stroke:0.15px #1c2b34;">2.9M</span>
<span class="t" style="left:514.36px;top:467.00px;font-size:9px;color:#1c2b34;letter-spacing:0.018px;-webkit-text-stroke:0.15px #1c2b34;">15.62M</span>
<span class="t" style="left:561.50px;top:467.00px;font-size:9px;color:#1c2b34;letter-spacing:0.240px;-webkit-text-stroke:0.15px #1c2b34;">kubernetes.cpu.usage.total</span>
<span class="t" style="left:724.00px;top:467.00px;font-size:9px;color:#1c2b34;letter-spacing:0.121px;-webkit-text-stroke:0.15px #1c2b34;">env:sandbox,kube_namespace:</span>
</div>
</body>
</html>
